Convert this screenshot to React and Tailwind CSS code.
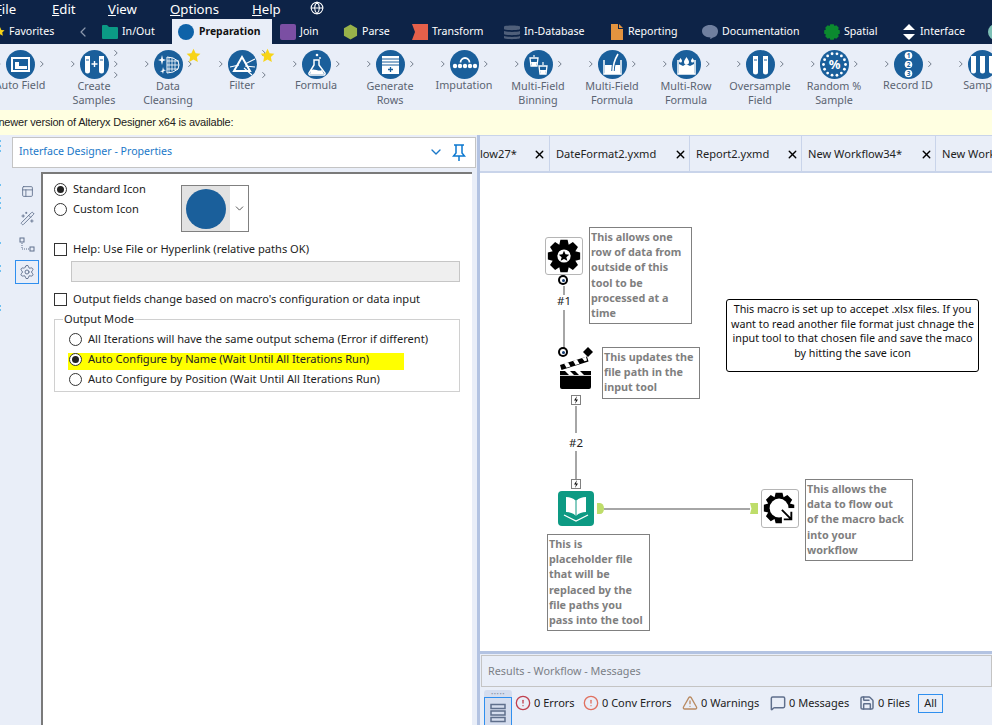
import React from 'react';
import { ChevronDown, ChevronLeft, CircleAlert, Globe, MessageSquare, PanelsTopLeft, Save, Settings, TriangleAlert, WandSparkles, X } from 'lucide-react';

// Gear outline used by the canvas tools
const gearPath = (cx, cy, outer, inner, teeth) => {
  const pts = [];
  const step = (Math.PI * 2) / teeth;
  for (let i = 0; i < teeth; i++) {
    const a = i * step - Math.PI / 2;
    [[-0.5, inner], [-0.28, outer], [0.28, outer], [0.5, inner]].forEach(([off, r]) => {
      pts.push(`${(cx + Math.cos(a + off * step) * r).toFixed(1)},${(cy + Math.sin(a + off * step) * r).toFixed(1)}`);
    });
  }
  return `M${pts.join('L')}Z`;
};

const Tube = ({ x, h = 15 }) => (
  <path d={`M${x} 6h5v${h - 2}a2.5 2.5 0 0 1-5 0z`} fill="#fff" />
);

const glyphs = {
  autofield: <><rect x="5" y="7" width="19" height="15" fill="#fff" /><rect x="7" y="9" width="15" height="11" fill="#1a5f9b" /><path d="M9 12h4v4h8v3H9z" fill="#fff" /></>,
  create: <><Tube x={5} h={17} /><Tube x={19} h={17} /><path d="M14.5 11v6M11.5 14h6" stroke="#fff" strokeWidth="1.4" /><path d="M6 10h3M20 10h3" stroke="#1a5f9b" /></>,
  cleansing: <><path d="M13 7l6 1 5 3 1 4-1 4-5 3-6 1z" fill="none" stroke="#fff" /><path d="M15 7v15M18 8v13M21 10v10M13 11h12M13 15h12M13 19h11" stroke="#fff" strokeWidth=".8" /><path d="M8 5l1 4 3 1-3 1-1 4-1-4-3-1 3-1zM9 17l.7 2.500 2.300.7-2.300.7L9 24l-.7-2.100-2.300-.7 2.300-.7z" fill="#fff" /></>,
  filter: <><path d="M14 7l8 14H6z" fill="none" stroke="#fff" strokeWidth="2" /><path d="M2 17l9-2M17 14l10-5M17 16l10 1M16 18l8 7" stroke="#fff" strokeWidth="1.100" /></>,
  formula: <><path d="M12 10h5v5l6 8a1.500 1.500 0 0 1-1 2H8a1.500 1.500 0 0 1-1-2l5-8z" fill="none" stroke="#fff" strokeWidth="1.500" /><path d="M9 20c3-2 8 2 11 0l2 4H8z" fill="#fff" /><circle cx="15" cy="5" r="1.300" fill="#fff" /><circle cx="18" cy="8" r=".9" fill="#fff" /></>,
  generate: <><path d="M6 6h17v18H6z" fill="#fff" /><path d="M6 9h17M6 12h17M6 15h17" stroke="#1a5f9b" /><path d="M14.500 17v5M12 19.500h5" stroke="#1a5f9b" strokeWidth="1.300" /></>,
  imputation: <><circle cx="5" cy="16" r="2.200" fill="#fff" /><circle cx="10" cy="16" r="2.200" fill="#fff" /><circle cx="15" cy="16" r="2.200" fill="#fff" /><circle cx="20" cy="16" r="2.200" fill="#fff" /><circle cx="25" cy="16" r="2.200" fill="#fff" /><path d="M10.500 12.500a4.500 4.500 0 0 1 9 0" fill="none" stroke="#fff" strokeWidth="1.800" /></>,
  binning: <><path d="M6 8h8l-1 8H7z" fill="none" stroke="#fff" strokeWidth="1.300" /><path d="M7 12h6l-1 4H8z" fill="#fff" /><path d="M15 16h8l-1 8h-6z" fill="none" stroke="#fff" strokeWidth="1.300" /><path d="M16 20h6l-.6 4h-4.800z" fill="#fff" /><path d="M10 5v2M19 12v3" stroke="#fff" strokeWidth="1.200" /></>,
  mfformula: <><path d="M6 10v14h17V10" fill="none" stroke="#fff" strokeWidth="1.500" /><path d="M7 15h15v9H7z" fill="#fff" /><path d="M20 4c-3 5-5 10-5 17" fill="none" stroke="#1a5f9b" strokeWidth="3.500" /><path d="M20 4c-3 5-5 10-5 17" fill="none" stroke="#fff" strokeWidth="1.600" /></>,
  mrformula: <><path d="M6 10v14h17V10" fill="none" stroke="#fff" strokeWidth="1.500" /><path d="M7 14l4 2 3-2 4 2 4-2v10H7z" fill="#fff" /><path d="M14.500 7c2 3 2.500 4 2.500 5a2.500 2.500 0 0 1-5 0c0-1 .5-2 2.500-5zM8.500 8c1 1.500 1.500 2 1.500 3a1.500 1.500 0 0 1-3 0c0-1 .5-1.500 1.500-3zM20.500 8c1 1.500 1.500 2 1.500 3a1.500 1.500 0 0 1-3 0c0-1 .5-1.500 1.500-3z" fill="#fff" /></>,
  oversample: <><Tube x={7} h={18} /><Tube x={17} h={18} /><path d="M8 10h3M18 10h3" stroke="#1a5f9b" /></>,
  random: <><g fill="#fff">{Array.from({ length: 14 }).map((_, i) => <circle key={i} cx={14.500 + Math.cos(i * 0.449) * 11} cy={14.500 + Math.sin(i * 0.449) * 11} r="1.400" />)}</g><text x="14.500" y="19" textAnchor="middle" fontSize="13" fontWeight="700" fill="#fff">%</text></>,
  recordid: <><g fill="#fff"><circle cx="14.500" cy="5.500" r="3.800" /><circle cx="14.500" cy="14.500" r="3.800" /><circle cx="14.500" cy="23.500" r="3.800" /></g><g fill="#1a5f9b" fontSize="6.500" fontWeight="700" textAnchor="middle"><text x="14.500" y="8">1</text><text x="14.500" y="17">2</text><text x="14.500" y="26">3</text></g></>,
  sample: <><Tube x={3} h={17} /><Tube x={12} h={17} /><Tube x={21} h={17} /></>,
};

const tools = [
  { name: 'autofield', lines: ['Auto Field'] },
  { name: 'create', lines: ['Create', 'Samples'], out: 3 },
  { name: 'cleansing', lines: ['Data', 'Cleansing'], star: true },
  { name: 'filter', lines: ['Filter'], out: 2, star: true },
  { name: 'formula', lines: ['Formula'] },
  { name: 'generate', lines: ['Generate', 'Rows'] },
  { name: 'imputation', lines: ['Imputation'] },
  { name: 'binning', lines: ['Multi-Field', 'Binning'] },
  { name: 'mfformula', lines: ['Multi-Field', 'Formula'] },
  { name: 'mrformula', lines: ['Multi-Row', 'Formula'] },
  { name: 'oversample', lines: ['Oversample', 'Field'] },
  { name: 'random', lines: ['Random %', 'Sample'] },
  { name: 'recordid', lines: ['Record ID'] },
  { name: 'sample', lines: ['Sample'] },
];

const Star = ({ className }) => (
  <svg viewBox="0 0 24 24" className={className}><path d="M12 1l3.400 7.300 7.600.9-5.600 5.300 1.500 7.800L12 18.400l-6.900 3.900 1.500-7.800L1 9.200l7.600-.9z" fill="#f7d417" /></svg>
);

const RibbonTool = ({ tool }) => {
  const chevronsY = tool.out === 3 ? [3, 14, 25] : tool.out === 2 ? [3, 25] : [14];
  return (
    <div className="w-[74px] shrink-0 flex flex-col items-center pt-[6px] relative">
      <div className="relative w-[29px] h-[29px]">
        <svg viewBox="0 0 29 29" className="w-[29px] h-[29px] rounded-full bg-[#1a5f9b] overflow-hidden">{glyphs[tool.name]}</svg>
        <svg viewBox="0 0 5 8" className="absolute left-[-9px] top-[10px] w-[4px] h-[8px]"><path d="M.5.5L4 4 .5 7.500" fill="none" stroke="#6d7785" strokeWidth="1.200" /></svg>
        {chevronsY.map((y) => (
          <svg key={y} viewBox="0 0 5 8" style={{ top: y - 4 }} className="absolute right-[-9px] w-[4px] h-[8px]"><path d="M.5.5L4 4 .5 7.500" fill="none" stroke="#6d7785" strokeWidth="1.200" /></svg>
        ))}
        {tool.star && <Star className="absolute left-[32px] top-[-2px] w-[15px] h-[15px]" />}
      </div>
      <div className={`text-[#5b6472] text-[10.800px] leading-[14px] text-center whitespace-nowrap ${tool.lines.length === 1 ? 'mt-[-1px]' : 'mt-0'}`}>
        {tool.lines.map((l) => <div key={l}>{l}</div>)}
      </div>
    </div>
  );
};

const Radio = ({ checked }) => (
  <span className="w-[13px] h-[13px] rounded-full border border-[#333] bg-white flex items-center justify-center shrink-0">
    {checked && <span className="w-[7px] h-[7px] rounded-full bg-[#222]" />}
  </span>
);

const Check = () => <span className="w-[13px] h-[13px] border border-[#333] bg-white shrink-0" />;

const Comment = ({ className, children }) => (
  <div className={`absolute bg-white border border-[#808080] px-[1px] pt-[1px] text-[10.800px] leading-[15.200px] font-bold text-[#7f7f7f] whitespace-nowrap ${className}`}>{children}</div>
);

const QBadge = ({ className }) => (
  <span className={`absolute w-[10px] h-[10px] rounded-full bg-black flex items-center justify-center ${className}`}>
    <span className="w-[6px] h-[6px] rounded-full bg-white flex items-center justify-center">
      <span className="w-[3px] h-[3px] rounded-full bg-[#123a70]" />
    </span>
  </span>
);

const Bolt = ({ className }) => (
  <span className={`absolute w-[10px] h-[10px] border border-[#808080] bg-white flex items-center justify-center ${className}`}>
    <svg viewBox="0 0 8 8" className="w-[8px] h-[8px]"><path d="M5 0L2 4.500h2L3 8l3-4.500H4z" fill="#111" /></svg>
  </span>
);

const Canvas = () => (
  <div className="flex-1 relative bg-white overflow-hidden">
    {/* connections */}
    <div className="absolute left-[83px] top-[113px] w-[2px] h-[9px] bg-[#a6a6a6]" />
    <div className="absolute left-[83px] top-[137px] w-[2px] h-[38px] bg-[#a6a6a6]" />
    <div className="absolute left-[95px] top-[233px] w-[2px] h-[27px] bg-[#a6a6a6]" />
    <div className="absolute left-[95px] top-[278px] w-[2px] h-[28px] bg-[#a6a6a6]" />
    <div className="absolute left-[124px] top-[335px] w-[146px] h-[2px] bg-[#a6a6a6]" />
    <span className="absolute left-[77px] top-[121px] text-[11.500px] leading-[14px] text-[#222]">#1</span>
    <span className="absolute left-[89px] top-[263px] text-[11.500px] leading-[14px] text-[#222]">#2</span>

    {/* control param */}
    <div className="absolute left-[65px] top-[64px] w-[38px] h-[38px] rounded-[3px] border border-[#b5b5b5] bg-white flex items-center justify-center">
      <svg viewBox="0 0 36 36" className="w-[34px] h-[34px]">
        <path d={gearPath(18, 18, 17.500, 13, 8)} fill="#000" />
        <circle cx="18" cy="18" r="7" fill="#fff" />
        <path d="M18 12.500l1.600 3.700 3.900.4-3 2.600 1 3.900-3.500-2-3.500 2 1-3.900-3-2.600 3.900-.4z" fill="#000" />
      </svg>
    </div>
    <QBadge className="left-[78px] top-[102px]" />

    {/* action tool */}
    <QBadge className="left-[78px] top-[174px]" />
    <svg viewBox="0 0 36 42" className="absolute left-[79px] top-[174px] w-[36px] h-[42px]">
      <path d="M29 0l5 5-5 5-5-5z" fill="#000" />
      <path d="M1 18l27-8.500 1.500 5-27 8.500z" fill="#000" />
      <path d="M5 16.500l4-1.300 2.500 4.300-4 1.300zM14 13.700l4-1.300 2.500 4.300-4 1.300zM23 11l4-1.300 1 3.800-2.500.8z" fill="#fff" />
      <path d="M1 24h31v16a2 2 0 0 1-2 2H3a2 2 0 0 1-2-2z" fill="#000" />
      <path d="M6 24l4 4h5l-4-4zM16 24l4 4h5l-4-4z" fill="#fff" />
      <path d="M1 28.500h31" stroke="#fff" strokeWidth=".8" />
    </svg>
    <Bolt className="left-[91px] top-[222px]" />
    <Bolt className="left-[91px] top-[306px]" />

    {/* macro input */}
    <div className="absolute left-[78px] top-[318px] w-[36px] h-[35px] rounded-[4px] bg-[#0d9a83] flex items-center justify-center">
      <svg viewBox="0 0 36 35" className="w-[36px] h-[35px]">
        <path d="M18 10c-3-3-6-4-10-4v15c4 0 7 1 10 4 3-3 6-4 10-4V6c-4 0-7 1-10 4z" fill="#fff" />
        <path d="M18 10v15" stroke="#0d9a83" />
        <path d="M6 24l12 6 12-6" fill="none" stroke="#fff" strokeWidth="1.300" />
      </svg>
    </div>
    <svg viewBox="0 0 7 11" className="absolute left-[117px] top-[330px] w-[7px] h-[11px]"><path d="M0 0h3a4 5.500 0 0 1 0 11H0z" fill="#bedd6a" /></svg>
    <svg viewBox="0 0 8 11" className="absolute left-[270px] top-[330px] w-[8px] h-[11px]"><path d="M0 0h8v11H0l1.500-5.500z" fill="#bedd6a" /></svg>

    {/* macro output */}
    <div className="absolute left-[281px] top-[316px] w-[38px] h-[39px] rounded-[3px] border border-[#b5b5b5] bg-white flex items-center justify-center">
      <svg viewBox="0 0 36 36" className="w-[34px] h-[34px]">
        <path d={gearPath(17, 17, 16.500, 12.500, 8)} fill="#000" />
        <circle cx="17" cy="17" r="10" fill="#fff" />
        <path d="M20 17h16v19H20z" fill="#fff" />
        <path d="M20 19l10 10M30 21v8h-8" fill="none" stroke="#000" strokeWidth="2" />
      </svg>
    </div>

    <Comment className="left-[109px] top-[54px] w-[103px] h-[97px]">This allows one<br />row of data from<br />outside of this<br />tool to be<br />processed at a<br />time</Comment>
    <Comment className="left-[122px] top-[174px] w-[98px] h-[52px]">This updates the<br />file path in the<br />input tool</Comment>
    <Comment className="left-[67px] top-[361px] w-[103px] h-[97px]">This is<br />placeholder file<br />that will be<br />replaced by the<br />file paths you<br />pass into the tool</Comment>
    <Comment className="left-[325px] top-[306px] w-[108px] h-[82px]">This allows the<br />data to flow out<br />of the macro back<br />into your<br />workflow</Comment>

    <div className="absolute left-[246px] top-[126px] w-[253px] h-[73px] bg-white border border-black rounded-[3px] pt-[2px] text-center text-[10.750px] leading-[14.700px] text-[#111]">
      This macro is set up to accepet .xlsx files. If you want to read another file format just chnage the input tool to that chosen file and save the maco by hitting the save icon
    </div>
  </div>
);

const docTabs = [
  { label: 'low27*', w: 'w-[70px]' },
  { label: 'DateFormat2.yxmd', w: 'w-[140px]' },
  { label: 'Report2.yxmd', w: 'w-[112px]' },
  { label: 'New Workflow34*', w: 'w-[134px]' },
  { label: 'New Workflow', w: 'w-[80px]', open: true },
];

const Cat = ({ icon, label, className }) => (
  <div className={`shrink-0 flex items-center gap-[4px] text-white text-[10.600px] whitespace-nowrap ${className}`}>
    {icon}
    <span>{label}</span>
  </div>
);

// bits of cut-off text that show at the window's left edge
const edgeMarks = [3, 8, 13, 47, 60, 65, 70, 105, 128, 133, 168, 172];

export default function App() {
  return (
    <div className="w-[992px] h-[725px] overflow-hidden flex flex-col bg-[#e9eef8] text-[#222]" style={{ fontFamily: '"Noto Sans", sans-serif' }}>
      {/* menu bar */}
      <div className="h-[19px] bg-[#0d2347] flex items-center text-white text-[13.200px] leading-[19px] shrink-0 relative">
        <span className="ml-[-5px] w-[57px]"><u>F</u>ile</span>
        <span className="w-[56px]"><u>E</u>dit</span>
        <span className="w-[62px]"><u>V</u>iew</span>
        <span className="w-[82px]"><u>O</u>ptions</span>
        <span className="w-[58px]"><u>H</u>elp</span>
        <Globe className="w-[14px] h-[14px] mb-[3px]" strokeWidth={1.800} />
      </div>

      {/* tool categories */}
      <div className="h-[25px] bg-[#0d2347] flex items-stretch shrink-0 overflow-hidden">
        <Cat className="ml-[-5px] w-[84px]" label="Favorites" icon={<Star className="w-[10px] h-[11px]" />} />
        <div className="w-[23px] shrink-0 flex items-center"><ChevronLeft className="w-[16px] h-[18px] ml-[-4px] text-[#8b98ad]" strokeWidth={1.800} /></div>
        <Cat className="w-[70px]" label="In/Out" icon={<svg viewBox="0 0 16 15" className="w-[16px] h-[15px]"><path d="M0 2a1 1 0 0 1 1-1h4l2 2h8a1 1 0 0 1 1 1v10a1 1 0 0 1-1 1H1a1 1 0 0 1-1-1z" fill="#0b9a85" /></svg>} />
        <div className="w-[100px] shrink-0 bg-[#e9eef8] pl-[6px] flex items-center gap-[5px] text-[10.400px] font-bold text-[#111]">
          <span className="w-[16px] h-[16px] rounded-full bg-[#0e62a8]" />
          <span>Preparation</span>
        </div>
        <Cat className="ml-[8px] w-[63px]" label="Join" icon={<span className="w-[16px] h-[16px] rounded-[2px] bg-[#7b4fa3]" />} />
        <Cat className="w-[69px]" label="Parse" icon={<svg viewBox="0 0 16 16" className="w-[15px] h-[16px]"><path d="M8 0l7 4v8l-7 4-7-4V4z" fill="#98b24a" /></svg>} />
        <Cat className="w-[92px]" label="Transform" icon={<svg viewBox="0 0 16 16" className="w-[16px] h-[16px]"><path d="M0 0h16v16H0l3-8z" fill="#e5604a" /></svg>} />
        <Cat className="w-[106px]" label="In-Database" icon={<svg viewBox="0 0 16 16" className="w-[16px] h-[16px]"><path d="M0 2.500C0 1 16 1 16 2.500V5C16 6.500 0 6.500 0 5zM0 7c3 1.200 13 1.200 16 0v3C16 11.500 0 11.500 0 10zM0 12c3 1.200 13 1.200 16 0v2c0 1.500-16 1.500-16 0z" fill="#4f5f7a" /></svg>} />
        <Cat className="w-[92px]" label="Reporting" icon={<svg viewBox="0 0 14 16" className="w-[14px] h-[16px]"><path d="M1 0h7v5h5v11H1zM9 0l4 4H9z" fill="#e4943f" /></svg>} />
        <Cat className="w-[122px]" label="Documentation" icon={<svg viewBox="0 0 16 14" className="w-[16px] h-[14px]"><path d="M8 0c4.500 0 8 2.500 8 6s-2 6-5 6.500c-1 .5-2 1.500-3 1.500l.5-1.500C3 12.500 0 9.500 0 6s3.500-6 8-6z" fill="#6f7f9f" /></svg>} />
        <Cat className="w-[78px]" label="Spatial" icon={<svg viewBox="0 0 16 16" className="w-[16px] h-[16px]"><path d={gearPath(8, 8, 8, 6.500, 8)} fill="#0b8a2f" /></svg>} />
        <Cat className="w-[86px]" label="Interface" icon={<svg viewBox="0 0 14 16" className="w-[14px] h-[16px]"><path d="M7 0l6 6H1zM7 16l-6-6h12z" fill="#fff" /></svg>} />
        <span className="shrink-0 self-center w-[16px] h-[16px] rounded-full bg-[#7dbfb5]" />
      </div>

      {/* ribbon */}
      <div className="h-[66px] bg-[#e9eef8] flex shrink-0 overflow-hidden">
        <div className="flex ml-[-17px]">
          {tools.map((t) => <RibbonTool key={t.name} tool={t} />)}
        </div>
      </div>

      {/* update notice */}
      <div className="h-[25px] bg-[#ffffe1] shrink-0 flex items-center overflow-hidden text-[11px] tracking-[-0.2px] text-[#222] whitespace-nowrap" style={{ fontFamily: '"Liberation Sans", sans-serif' }}>
        <span className="ml-[-11px]">A newer version of Alteryx Designer x64 is available:</span>
      </div>

      <div className="flex-1 flex min-h-0">
        {/* properties */}
        <div className="w-[477px] shrink-0 flex bg-[#e9eef8] pt-[2px]">
          <div className="w-[12px] shrink-0 flex flex-col relative">
            {edgeMarks.map((y) => <span key={y} style={{ top: y }} className="absolute left-0 w-[1px] h-[2px] bg-[#6fc0f0]" />)}
          </div>
          <div className="flex-1 flex flex-col min-w-0">
            <div className="h-[31px] mr-[1px] shrink-0 bg-white border border-[#c4c4c4] flex items-center pl-[6px] pr-[9px] pb-[1px] text-[10.600px] text-[#1b78c8]">
              <span className="flex-1">Interface Designer - Properties</span>
              <ChevronDown className="w-[16px] h-[16px] mr-[8px]" strokeWidth={2} />
              <svg viewBox="0 0 14 17" className="w-[14px] h-[17px] text-[#0b78d0]"><path d="M2 1h10M4 1v8L1.500 12h11L10 9V1M7 12v5" fill="none" stroke="currentColor" strokeWidth="1.500" /></svg>
            </div>
            <div className="flex-1 flex min-h-0 pt-[4px]">
              <div className="w-[29px] shrink-0 pl-[4px] pr-[3px] flex flex-col items-center pt-[13px] text-[#5f6f8c]">
                <PanelsTopLeft className="w-[13px] h-[13px]" strokeWidth={1.600} />
                <WandSparkles className="w-[15px] h-[15px] mt-[13px]" strokeWidth={1.400} />
                <svg viewBox="0 0 16 16" className="w-[16px] h-[16px] mt-[11px] shrink-0"><rect x="1" y="1" width="4" height="4" fill="none" stroke="#5f6f8c" /><rect x="11" y="10" width="4" height="4" fill="none" stroke="#5f6f8c" /><path d="M3 6v6h7" fill="none" stroke="#5f6f8c" strokeDasharray="1 1" /></svg>
                <div className="w-[24px] h-[24px] mt-[7px] shrink-0 border border-[#2f8fef] flex items-center justify-center">
                  <Settings className="w-[16px] h-[16px]" strokeWidth={1.400} />
                </div>
              </div>
              <div className="w-[431px] shrink-0 bg-white border-t-2 border-l-2 border-[#7a7a7a] text-[11.100px] text-[#222]">
                <div className="flex pl-[11px] pt-[7px] h-[58px]">
                  <div className="w-[127px] flex flex-col gap-[4px]">
                    <div className="flex items-center gap-[6px] h-[16px]"><Radio checked /><span>Standard Icon</span></div>
                    <div className="flex items-center gap-[6px] h-[16px]"><Radio /><span>Custom Icon</span></div>
                  </div>
                  <div className="w-[68px] h-[47px] mt-[4px] border border-[#808080] flex">
                    <div className="w-[48px] bg-[#e2e2e2] flex items-center justify-center"><span className="w-[40px] h-[40px] rounded-full bg-[#1a5f9b]" /></div>
                    <div className="flex-1 flex items-center justify-center"><ChevronDown className="w-[13px] h-[13px] text-[#333]" strokeWidth={1.500} /></div>
                  </div>
                </div>
                <div className="flex items-center gap-[6px] pl-[11px] h-[16px] mt-[9px]"><Check /><span>Help: Use File or Hyperlink (relative paths OK)</span></div>
                <div className="ml-[28px] w-[389px] h-[21px] mt-[4px] bg-[#efefef] border border-[#c6c6c6]" />
                <div className="flex items-center gap-[6px] pl-[11px] h-[16px] mt-[9px]"><Check /><span>Output fields change based on macro's configuration or data input</span></div>
                <div className="relative ml-[11px] w-[406px] h-[73px] mt-[12px] border border-[#d0d0d0] pl-[14px] pt-[11px]">
                  <span className="absolute left-[8px] top-[-9px] bg-white px-[1px]">Output Mode</span>
                  <div className="absolute left-[13px] top-[33px] w-[336px] h-[17px] bg-[#ffff00]" />
                  <div className="relative flex flex-col gap-[4px]">
                    <div className="flex items-center gap-[6px] h-[16px]"><Radio /><span>All Iterations will have the same output schema (Error if different)</span></div>
                    <div className="flex items-center gap-[6px] h-[16px]"><Radio checked /><span>Auto Configure by Name (Wait Until All Iterations Run)</span></div>
                    <div className="flex items-center gap-[6px] h-[16px]"><Radio /><span>Auto Configure by Position (Wait Until All Iterations Run)</span></div>
                  </div>
                </div>
              </div>
            </div>
          </div>
        </div>

        {/* splitter */}
        <div className="w-[3px] shrink-0 bg-[#b3c3e2]" />

        {/* workflow side */}
        <div className="flex-1 flex flex-col min-w-0">
          <div className="h-[38px] shrink-0 border-t border-b-2 border-[#c9d4ea] flex overflow-hidden text-[11.100px] text-[#222]">
            {docTabs.map((t) => (
              <div key={t.label} className={`${t.w} shrink-0 h-full pt-[1px] flex items-center justify-between whitespace-nowrap border-r border-[#c9d4ea] ${t.label === 'low27*' ? 'pl-[0px] pr-[3px]' : 'pl-[6px] pr-[2px]'}`}>
                <span>{t.label}</span>
                {!t.open && <X className="w-[13px] h-[13px] text-black" strokeWidth={2.500} />}
              </div>
            ))}
          </div>
          <Canvas />
          <div className="h-[3px] shrink-0 bg-[#b3c3e2]" />
          <div className="h-[71px] shrink-0 flex flex-col pl-[1px] pt-[1px]">
            <div className="h-[32px] shrink-0 border border-[#c4c4c4] flex items-center pl-[6px] text-[10.800px] text-[#7b7f86]">Results - Workflow - Messages</div>
            <div className="flex-1 flex items-start text-[11px] text-[#222]">
              <div className="w-[28px] h-[35px] mt-[3px] ml-[3px] shrink-0 rounded-t-[3px] bg-[#d5ddee] flex flex-col items-center">
                <div className="h-[6px] mt-[1px] text-[#8e97a8] text-[6px] leading-[6px] tracking-[0.5px]">•••••</div>
                <div className="w-[28px] flex-1 border border-b-0 border-[#2f8fef] flex items-start justify-center pt-[5px]">
                  <svg viewBox="0 0 16 20" className="w-[16px] h-[20px]"><path d="M1 1.500h14v4H1zM1 8h14v4H1zM1 14.500h14v4H1z" fill="none" stroke="#5f6f8c" strokeWidth="1.500" /></svg>
                </div>
              </div>
              <div className="flex items-center h-[20px] mt-[6px] ml-[3px]">
                <CircleAlert className="w-[16px] h-[16px] text-[#c0404f] mr-[3px]" strokeWidth={2} />
                <span className="w-[49px]">0 Errors</span>
                <CircleAlert className="w-[16px] h-[16px] text-[#e0705f] mr-[3px]" strokeWidth={2} />
                <span className="w-[80px]">0 Conv Errors</span>
                <TriangleAlert className="w-[16px] h-[16px] text-[#b98b63] mr-[3px]" strokeWidth={2} />
                <span className="w-[69px]">0 Warnings</span>
                <MessageSquare className="w-[16px] h-[16px] text-[#5f6f8c] mr-[3px]" strokeWidth={2.200} />
                <span className="w-[70px]">0 Messages</span>
                <Save className="w-[16px] h-[16px] text-[#5f6f8c] mr-[3px]" strokeWidth={2.200} />
                <span className="w-[40px]">0 Files</span>
                <span className="w-[25px] h-[19px] border border-[#2f8fef] flex items-center justify-center">All</span>
              </div>
            </div>
          </div>
        </div>
      </div>
    </div>
  );
}
